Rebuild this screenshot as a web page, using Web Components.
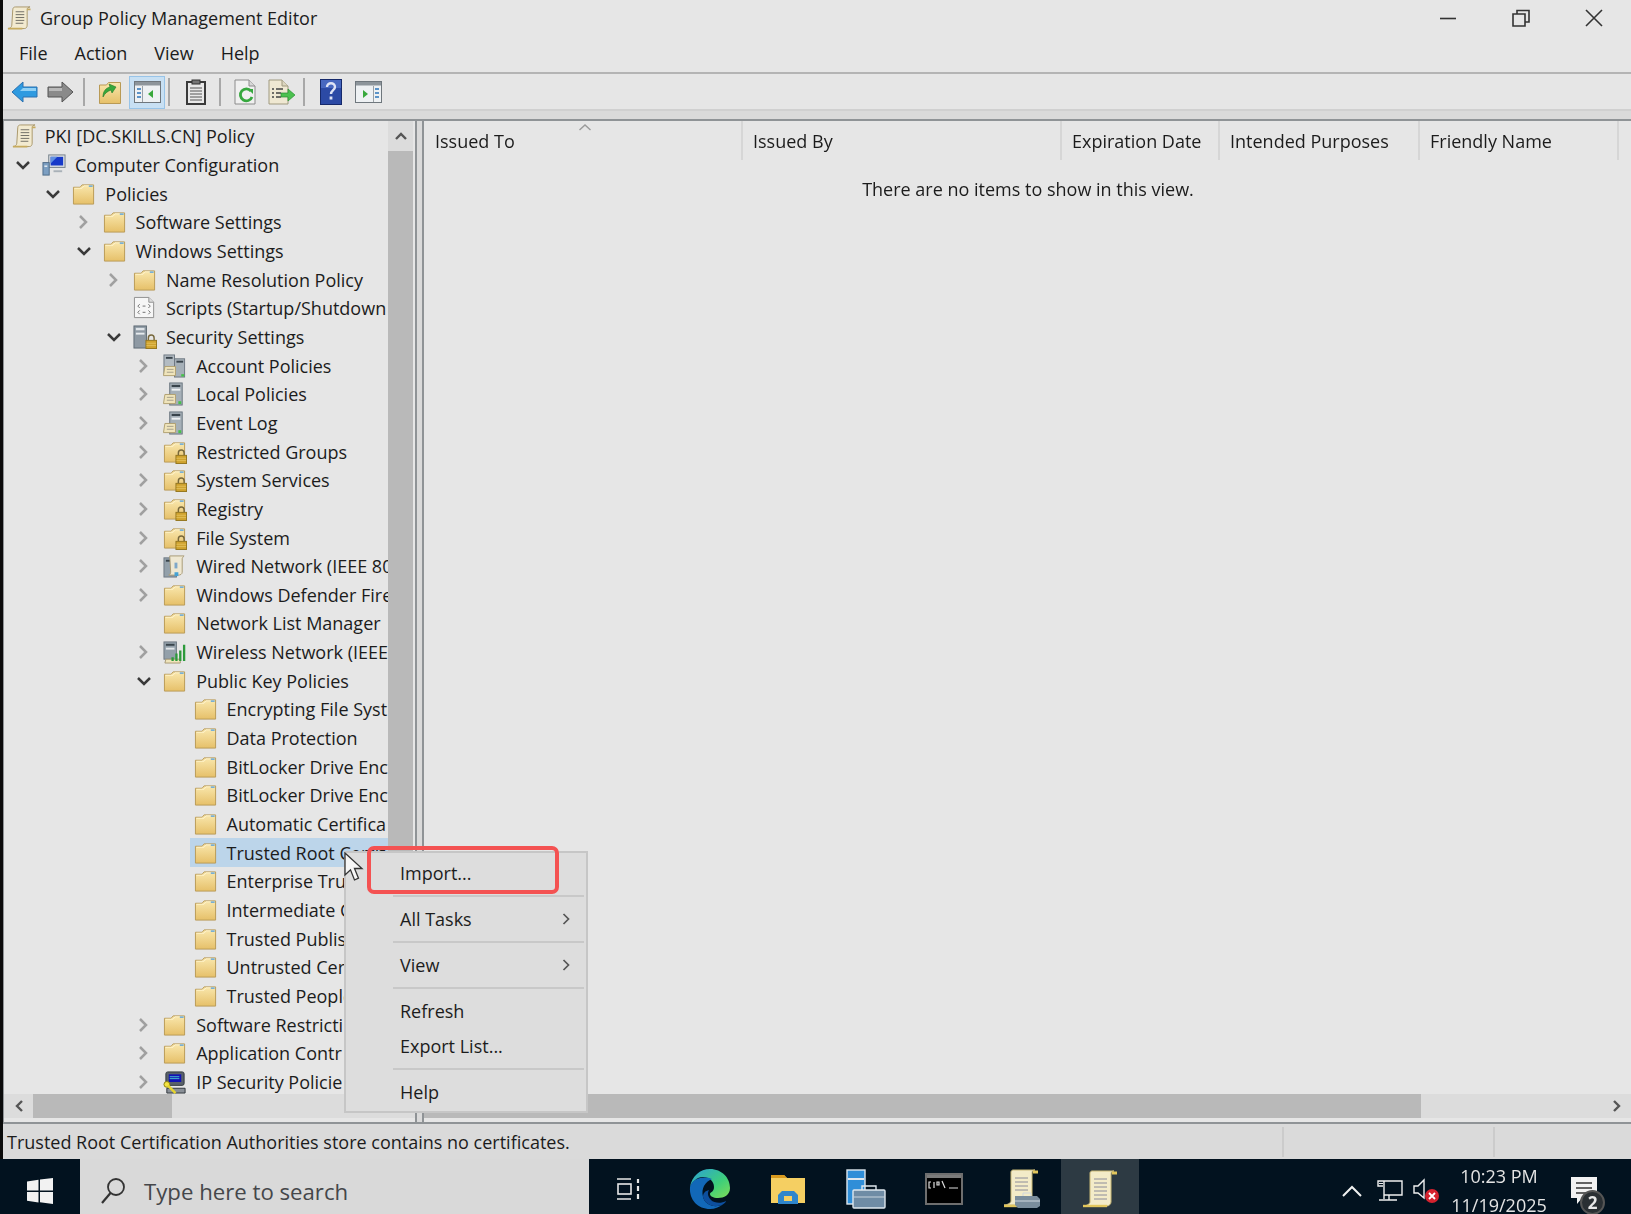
<!DOCTYPE html>
<html>
<head>
<meta charset="utf-8">
<title>Group Policy Management Editor</title>
<style>
  html, body { margin: 0; padding: 0; background: #0b0b0b; }
  body {
    width: 1631px;
    height: 1214px;
    overflow: hidden;
    font-family: "Open Sans", "Noto Sans", "Liberation Sans", sans-serif;
    font-size: 18px;
    color: #1c1c1c;
  }
</style>
</head>
<body>
<gp-app></gp-app>

<script>
const FOLDER_GRAD = `<defs><linearGradient id="fg" x1="0" y1="0" x2="0" y2="1"><stop offset="0" stop-color="#f9e7ad"/><stop offset="1" stop-color="#e6c069"/></linearGradient></defs>`;
const FOLDER = `${FOLDER_GRAD}<path d="M1.500 5.500h7l2-2.500h12v20h-21z" fill="url(#fg)" stroke="#b99a55"/><path d="M2.500 6.500h8l2-2.500h9" fill="none" stroke="#fff3cc"/><rect x="17.500" y="3.500" width="4" height="1.600" fill="#69a9d8"/>`;
const LOCK = `<path d="M16 16v-2.500a3 3 0 0 1 6 0V16" fill="none" stroke="#77683c" stroke-width="1.500"/><rect x="13.500" y="16" width="11" height="8.500" fill="#cfa22e" stroke="#94761f"/><path d="M14 19h10M14 21.500h10" stroke="#e8c865" stroke-width=".8"/>`;
const MINI_SCROLL = `<path d="M2 13h11v9.500H0.500z" fill="#efe4bb" stroke="#b0a070"/><path d="M4 16h7M4 19h7" stroke="#9d9684" stroke-width=".9"/>`;
const TOWER = `<rect x="7" y="1" width="13" height="23" fill="#a6b0b8" stroke="#69747e"/><rect x="9" y="3" width="9" height="2.200" fill="#39444c"/><rect x="9" y="7" width="9" height="2" fill="#eef1f3"/>`;
const SCROLL = `<path d="M6 4c0-2 1-3 3-3h15c-1.500 0-3 1-3 2.500V20c0 2-1 3.500-3 3.500H1c2 0 4-1.500 4-3.500z" fill="#f2ead0" stroke="#a8976a"/><path d="M21 3.500h3.500M1 23.500h15" stroke="#c7ab5e" stroke-width="1.800"/><path d="M9 6h9M9 9h9M9 12h9M9 15h9M9 18h8" stroke="#6d6c64"/>`;

const ICONS = {
  folder: FOLDER,
  lockfolder: FOLDER + LOCK,
  scroll: SCROLL,
  computer: `<rect x="7" y="2" width="17" height="13" fill="#d9dde2" stroke="#75808a"/><rect x="9" y="4" width="13" height="9" fill="#1739c9"/><path d="M9 4h7L9 11z" fill="#5f8ee0"/><path d="M12 18h9v2h-9z" fill="#a9b1b8"/><rect x="1" y="10" width="6.500" height="13" fill="#7c9fc2" stroke="#4e6b88"/><rect x="2.500" y="13" width="3" height="1.500" fill="#e9eef3"/>`,
  scripts: `<path d="M1.500 1.500h15l5 5v16h-20z" fill="#f6f6f6" stroke="#8e8e8e"/><path d="M16.500 1.500v5h5" fill="#ddd" stroke="#8e8e8e"/><path d="M7 8.500l-2 2 2 2M10 10.500h3M16 8.500l2 2-2 2M7 15l-2 2 2 2M10 17h3M16 15l2 2-2 2" fill="none" stroke="#6f6f6f"/>`,
  security: `<rect x="1" y="1" width="13" height="23" fill="#8e99a3" stroke="#5e6a74"/><rect x="3" y="3" width="9" height="2.500" fill="#dfe4e8"/><rect x="3" y="8" width="9" height="2" fill="#e7ebee"/>${LOCK}`,
  account: `<rect x="1" y="1" width="11" height="20" fill="#b3bcc3" stroke="#6e7882"/><rect x="3" y="3" width="7" height="2" fill="#39444c"/><rect x="12" y="5" width="10.500" height="19" fill="#a6b0b8" stroke="#6e7882"/><rect x="14" y="7" width="7" height="2" fill="#39444c"/><rect x="19" y="21" width="3" height="2.500" fill="#46c24a"/>${MINI_SCROLL}`,
  local: `${TOWER}<rect x="16" y="20" width="3" height="3" fill="#46c24a"/>${MINI_SCROLL}`,
  wired: `<rect x="1" y="4" width="13" height="20" fill="#93a0aa" stroke="#6e7882"/><rect x="3" y="6" width="9" height="2" fill="#39444c"/><path d="M7 2h15c-1 1-2 2-2 3v14c0 2-2 3-4 3H6c1 0 2-2 2-3z" fill="#efe8d2" stroke="#a79a75"/><rect x="12" y="9" width="3" height="6" fill="#7fa8c9"/><rect x="12" y="19" width="4" height="4" fill="#46a2d4"/>`,
  wireless: `<rect x="1" y="2" width="13" height="18" fill="#93a0aa" stroke="#6e7882"/><rect x="3" y="4" width="9" height="2" fill="#39444c"/><rect x="3" y="8" width="9" height="2" fill="#e3e7ea"/><path d="M3 20h15v4H2z" fill="#efe4bb" stroke="#a79a75"/><path d="M10 22v-4M14 22v-8M18 22v-11M22 22V5" stroke="#2c9a3b" stroke-width="2.400"/>`,
  ipsec: `<rect x="3" y="2" width="19" height="14" rx="2" fill="#59616a" stroke="#30363c"/><rect x="6" y="4.500" width="13" height="8" fill="#1212b5"/><path d="M7 7h10M7 9h10" stroke="#45c0d0"/><path d="M4 19h19v5H4z" fill="#8a9097" stroke="#30363c"/><circle cx="4" cy="15" r="3" fill="#f3e342" stroke="#8a7f10"/><path d="M5 16l8 8" stroke="#e6d52d" stroke-width="2.600"/>`
};

const chevronRight = `<svg width="12" height="16" viewBox="0 0 12 16"><path d="M3 2l6 6-6 6" fill="none" stroke="#a0a0a0" stroke-width="2.500"/></svg>`;
const chevronDown = `<svg width="16" height="12" viewBox="0 0 16 12"><path d="M2 3l6 6 6-6" fill="none" stroke="#3a3a3a" stroke-width="2.500"/></svg>`;

class GpTitlebar extends HTMLElement {
  constructor() {
    super();
    this.attachShadow({ mode: "open" }).innerHTML = `
      <style>
        :host { display: flex; align-items: center; height: 36px; padding-left: 4px; }
        svg.app { width: 24px; height: 24px; margin-right: 9px; }
        span { flex: 1; font-size: 18px; color: #1c1c1c; }
        .btns { display: flex; }
        .btns svg { display: block; margin-left: 51px; }
      </style>
      <svg class="app" viewBox="0 0 25 25">${ICONS.scroll}</svg>
      <span>Group Policy Management Editor</span>
      <div class="btns">
        <svg width="22" height="22" viewBox="0 0 22 22"><path d="M3 11.500h16" stroke="#333" stroke-width="1.600"/></svg>
        <svg width="22" height="22" viewBox="0 0 22 22"><path d="M3 7h12v12H3zM7 7V3.500h12v11.500h-4" fill="none" stroke="#333" stroke-width="1.600"/></svg>
        <svg width="22" height="22" viewBox="0 0 22 22" style="margin-right:26px"><path d="M3 3l16 16M19 3L3 19" stroke="#333" stroke-width="1.600"/></svg>
      </div>
    `;
  }
}

class GpMenubar extends HTMLElement {
  constructor() {
    super();
    this.attachShadow({ mode: "open" }).innerHTML = `
      <style>
        :host { display: flex; align-items: center; height: 34px; padding: 0 0 2px 16px; gap: 27px; border-bottom: 2px solid #b4b4b4; }
        span { font-size: 18px; color: #1c1c1c; }
      </style>
      <span>File</span><span>Action</span><span>View</span><span>Help</span>
    `;
  }
}

class GpToolbar extends HTMLElement {
  constructor() {
    super();
    this.attachShadow({ mode: "open" }).innerHTML = `
      <style>
        :host { display: flex; align-items: center; height: 34px; padding: 1px 0 0 8px; border-bottom: 2px solid #d0d0d0; }
        svg { display: block; flex: none; }
        i { display: block; width: 2px; height: 28px; background: #a8a8a8; flex: none; }
        .on { display: flex; align-items: center; justify-content: center; width: 36px; height: 33px; background: #c8e0f3; border: 1px solid #98c4e8; box-sizing: border-box; flex: none; }
      </style>
      <svg style="margin-left:0" width="27" height="24" viewBox="0 0 27 24"><path d="M1 12L12 2v5h14v10H12v5z" fill="#2e9ae0" stroke="#2a70b0"/><path d="M12 8h13v3H9z" fill="#8fd0f5"/></svg>
      <svg style="margin-left:9px" width="27" height="24" viewBox="0 0 27 24"><path d="M26 12L15 2v5H1v10h14v5z" fill="#8a8a8a" stroke="#555"/><path d="M2 8h13v3H2z" fill="#b9b9b9"/></svg>
      <i style="margin-left:9px"></i>
      <svg style="margin-left:13px" width="24" height="26" viewBox="0 0 24 26">${FOLDER_GRAD}<path d="M1.500 6h7l2-2.500h12v21h-21z" fill="url(#fg)" stroke="#b99a55"/><path d="M5 18c0-6 3-9 7-10l-1-3 7 3-4 6-1-3c-3 1-6 3-8 7z" fill="#38a83c" stroke="#1f7a25" stroke-width=".6"/></svg>
      <div class="on" style="margin-left:7px"><svg width="27" height="24" viewBox="0 0 27 24"><rect x=".5" y="1.500" width="26" height="21" fill="#eef1f3" stroke="#6f777d"/><rect x="1" y="2" width="25" height="3.500" fill="#8d959b"/><path d="M3 9h4M3 13h4M3 17h4" stroke="#5b93c8" stroke-width="2"/><path d="M8.500 6v16" stroke="#9aa0a6"/><path d="M19 10v8l-5-4z" fill="#38a83c"/></svg></div>
      <i style="margin-left:3px"></i>
      <svg style="margin-left:15px" width="22" height="26" viewBox="0 0 22 26"><rect x="2" y="3" width="18" height="22" fill="#e9e9e9" stroke="#3a3a3a" stroke-width="2"/><rect x="7" y="1" width="8" height="4" fill="#777" stroke="#333"/><path d="M5 9h12M5 12h12M5 15h12M5 18h12M5 21h12" stroke="#555"/></svg>
      <i style="margin-left:12px"></i>
      <svg style="margin-left:13px" width="22" height="26" viewBox="0 0 22 26"><path d="M1 1h14l6 6v18H1z" fill="#f0f0f0" stroke="#8c8c8c"/><path d="M15 1v6h6" fill="#d8d8d8" stroke="#8c8c8c"/><path d="M17 12a6 6 0 1 0 1 6" fill="none" stroke="#36a83e" stroke-width="2.800"/><path d="M14 10l5 0v5z" fill="#36a83e"/></svg>
      <svg style="margin-left:12px" width="28" height="26" viewBox="0 0 28 26"><path d="M1 1h13l6 6v18H1z" fill="#efe8d2" stroke="#a09a80"/><path d="M14 1v6h6" fill="#dcd6c0" stroke="#a09a80"/><path d="M4 10h2M8 10h7M4 14h2M8 14h5M4 18h2M8 18h5" stroke="#444" stroke-width="1.400"/><path d="M13 14h7v-4l7 6-7 6v-4h-7z" fill="#4cc14f" stroke="#2a9032" stroke-width=".7"/></svg>
      <i style="margin-left:7px"></i>
      <svg style="margin-left:15px" width="22" height="26" viewBox="0 0 22 26"><rect x=".5" y=".5" width="21" height="25" fill="#2c4aa5" stroke="#16296b"/><rect x="1" y="1" width="20" height="8" fill="#4868c0"/><path d="M7 8c0-5 8-5 8 0 0 3-4 3.500-4 7" fill="none" stroke="#dfe4f5" stroke-width="2.400"/><rect x="9.600" y="17.500" width="2.800" height="3" fill="#dfe4f5"/></svg>
      <svg style="margin-left:13px" width="27" height="24" viewBox="0 0 27 24"><rect x=".5" y="1.500" width="26" height="21" fill="#eef1f3" stroke="#6f777d"/><rect x="1" y="2" width="25" height="3.500" fill="#8d959b"/><path d="M20 9h4M20 13h4M20 17h4" stroke="#5b93c8" stroke-width="2"/><path d="M18.500 6v16" stroke="#9aa0a6"/><path d="M8 10v8l5-4z" fill="#38a83c"/></svg>
    `;
  }
}

class TreeRow extends HTMLElement {
  constructor() {
    super();
    const level = +this.getAttribute("level");
    const kind = this.getAttribute("icon") || "folder";
    const exp = this.getAttribute("exp");
    const pad = level === 0 ? 7.7 : level * 30.3 - 21.3;
    const arrow = exp === "open" ? chevronDown : exp === "closed" ? chevronRight : "";
    this.attachShadow({ mode: "open" }).innerHTML = `
      <style>
        :host { display: flex; align-items: center; height: 28.67px; padding-left: ${pad}px; white-space: nowrap; }
        .exp { width: ${level === 0 ? 0 : 29}px; flex: none; display: flex; align-items: center; padding-left: ${level === 0 ? 0 : exp === "open" ? 2 : 3}px; box-sizing: border-box; }
        .item { flex: 1; display: flex; align-items: center; height: 100%; margin-left: -4px; padding-left: 4px; }
        :host([selected]) .item { background: #bcd5ea; }
        svg.ico { width: 24px; height: 24px; margin-right: 9px; flex: none; }
        .exp svg { display: block; }
        span { font-size: 18px; color: #1c1c1c; }
      </style>
      <div class="exp">${arrow}</div>
      <div class="item"><svg class="ico" viewBox="0 0 25 25">${ICONS[kind]}</svg><span><slot></slot></span></div>
    `;
  }
}

class GpTree extends HTMLElement {
  constructor() {
    super();
    this.attachShadow({ mode: "open" }).innerHTML = `
      <style>
        :host { display: flex; flex-direction: column; width: 411px; border-right: 2px solid #8f9396; border-left: 1px solid #8f9396; }
        .top { flex: 1; display: flex; min-height: 0; }
        .rows { width: 384px; padding-top: 1px; overflow: hidden; flex: none; box-sizing: border-box; }
        .vbar { flex: none; width: 25px; display: flex; flex-direction: column; background: #dcdcdc; }
        .up { height: 30px; display: flex; align-items: center; justify-content: center; }
        .thumb { flex: 1; background: #b9b9b9; }
        .hbar { height: 24px; margin-bottom: 4px; flex: none; display: flex; align-items: center; background: #dcdcdc; }
        .left { width: 29px; display: flex; justify-content: center; }
        .hthumb { width: 139px; height: 24px; background: #b9b9b9; }
      </style>
      <div class="top">
        <div class="rows"><slot></slot></div>
        <div class="vbar">
          <div class="up"><svg width="14" height="10" viewBox="0 0 14 10"><path d="M2 8l5-5 5 5" fill="none" stroke="#555" stroke-width="2.400"/></svg></div>
          <div class="thumb"></div>
        </div>
      </div>
      <div class="hbar">
        <div class="left"><svg width="10" height="14" viewBox="0 0 10 14"><path d="M8 2L3 7l5 5" fill="none" stroke="#555" stroke-width="2.400"/></svg></div>
        <div class="hthumb"></div>
      </div>
    `;
  }
}

class GpList extends HTMLElement {
  constructor() {
    super();
    const cols = [["Issued To", 319], ["Issued By", 319], ["Expiration Date", 158], ["Intended Purposes", 200], ["Friendly Name", 199]];
    this.attachShadow({ mode: "open" }).innerHTML = `
      <style>
        :host { display: flex; flex-direction: column; flex: 1; min-width: 0; border-left: 2px solid #8f9396; position: relative; }
        .head { display: flex; height: 39px; flex: none; }
        .col { box-sizing: border-box; padding-left: 10px; display: flex; align-items: center; border-right: 2px solid #d6d6d6; font-size: 18px; color: #1c1c1c; }
        .col:first-child { padding-left: 11px; }
        .sort { position: absolute; left: 154px; top: 2px; }
        .empty { flex: 1; text-align: center; padding-top: 17px; font-size: 18px; color: #1c1c1c; width: 1208px; }
        .hbar { height: 24px; margin-bottom: 4px; display: flex; align-items: center; background: #dcdcdc; flex: none; }
        .thumb { width: 997px; height: 24px; background: #b9b9b9; }
        .end { margin-left: auto; margin-right: 9px; display: block; }
      </style>
      <div class="head">
        ${cols.map(c => `<div class="col" style="width:${c[1]}px">${c[0]}</div>`).join("")}
      </div>
      <svg class="sort" width="14" height="8" viewBox="0 0 14 8"><path d="M1.500 7L7 2l5.500 5" fill="none" stroke="#9a9a9a" stroke-width="1.400"/></svg>
      <div class="empty">There are no items to show in this view.</div>
      <div class="hbar"><div class="thumb"></div><svg class="end" width="10" height="14" viewBox="0 0 10 14"><path d="M2 2l5 5-5 5" fill="none" stroke="#555" stroke-width="2.400"/></svg></div>
    `;
  }
}

class CtxMenu extends HTMLElement {
  constructor() {
    super();
    const sub = `<svg width="8" height="14" viewBox="0 0 8 14"><path d="M1.500 2l5 5-5 5" fill="none" stroke="#555" stroke-width="1.700"/></svg>`;
    this.attachShadow({ mode: "open" }).innerHTML = `
      <style>
        :host { position: absolute; left: 344px; top: 851px; width: 244px; height: 262px; box-sizing: border-box; padding: 2px 0; background: #dddddd; border: 2px solid #c6c6c6; }
        .it { height: 35px; display: flex; align-items: center; justify-content: space-between; padding: 0 16px 0 54px; font-size: 18px; color: #1c1c1c; }
        hr { border: 0; height: 2px; background: #c8c8c8; margin: 4.500px 2px 4.500px 47px; }
        .mark { position: absolute; left: 21px; top: -7px; width: 192px; height: 48px; box-sizing: border-box; border: 4px solid #f45252; border-radius: 7px; }
      </style>
      <div class="it">Import...</div>
      <hr>
      <div class="it">All Tasks ${sub}</div>
      <hr>
      <div class="it">View ${sub}</div>
      <hr>
      <div class="it">Refresh</div>
      <div class="it">Export List...</div>
      <hr>
      <div class="it">Help</div>
      <div class="mark"></div>
    `;
  }
}

class MouseCursor extends HTMLElement {
  constructor() {
    super();
    this.attachShadow({ mode: "open" }).innerHTML = `
      <style>:host { position: absolute; left: 344px; top: 852px; width: 20px; height: 30px; }</style>
      <svg width="20" height="30" viewBox="0 0 20 30"><path d="M1 1v22l5.500-5.200L10.500 28l4-1.800-4-9.700H18z" fill="#f6f6f6" stroke="#333" stroke-width="1.300"/></svg>
    `;
  }
}

class GpStatus extends HTMLElement {
  constructor() {
    super();
    this.attachShadow({ mode: "open" }).innerHTML = `
      <style>
        :host { display: flex; height: 35px; flex: none; background: #dadada; align-items: center; font-size: 18px; color: #1c1c1c; padding-left: 4px; border-top: 2px solid #8f9396; }
        span { flex: none; width: 1275px; }
        i { display: block; width: 2px; height: 30px; background: #cbcbcb; flex: none; }
      </style>
      <span>Trusted Root Certification Authorities store contains no certificates.</span>
      <i></i><div style="width:209px"></div><i></i>
    `;
  }
}

class GpTaskbar extends HTMLElement {
  constructor() {
    super();
    this.attachShadow({ mode: "open" }).innerHTML = `
      <style>
        :host { display: flex; align-items: center; height: 55px; flex: none; background: #02121f; position: relative; color: #e8e8e8; }
        svg { display: block; flex: none; }
        .start { width: 80px; height: 100%; display: flex; align-items: center; justify-content: center; padding-top: 9px; box-sizing: border-box; }
        .search { width: 509px; height: 100%; background: #d9d9d9; display: flex; align-items: center; padding: 9px 0 0 20px; box-sizing: border-box; gap: 18px; }
        .search span { font-size: 22.2px; color: #45474a; }
        .app { width: 78px; height: 100%; display: flex; align-items: center; justify-content: center; flex: none; padding-top: 5px; box-sizing: border-box; }
        .active { background: #2d3a43; }
        .tray { margin-left: auto; display: flex; align-items: center; height: 100%; padding-top: 9px; box-sizing: border-box; }
        .clock { text-align: center; font-size: 18px; line-height: 29px; width: 116px; color: #e4e4e4; margin-top: -9px; padding-top: 8px; }
      </style>
      <div class="start"><svg width="26" height="26" viewBox="0 0 26 26"><path d="M0 3.500l11.500-1.700v10.600H0zM13 1.600L26 0v12.400H13zM0 14h11.500v10.400L0 22.700zM13 14h13v12l-13-1.800z" fill="#f2f2f2"/></svg></div>
      <div class="search">
        <svg width="26" height="28" viewBox="0 0 26 28"><circle cx="16" cy="10" r="8" fill="none" stroke="#333" stroke-width="1.800"/><path d="M10.500 16L2 26" stroke="#333" stroke-width="2.200"/></svg>
        <span>Type here to search</span>
      </div>
      <div class="app" style="margin-left:13px;width:52px"><svg width="26" height="24" viewBox="0 0 26 24"><path d="M2 2h14M2 22h14" stroke="#e8e8e8" stroke-width="1.600"/><rect x="3" y="7" width="13" height="10" fill="none" stroke="#e8e8e8" stroke-width="1.600"/><path d="M23 2v4M23 9v5M23 17v5" stroke="#e8e8e8" stroke-width="2.200"/></svg></div>
      <div class="app" style="margin-left:17px"><svg width="42" height="42" viewBox="0 0 42 42"><defs><linearGradient id="eg" x1="0" y1="0" x2="1" y2="1"><stop offset="0" stop-color="#2b9fd9"/><stop offset=".6" stop-color="#3ecf7a"/><stop offset="1" stop-color="#7fdc58"/></linearGradient></defs><path d="M1 19C3 8 11 1 21 1c12 0 20 9 20 19 0 7-6 10-12 10-5 0-8-2-8-4 0-2 4-2 4-7 0-6-5-10-11-10C8 9 3 14 1 19z" fill="url(#eg)"/><path d="M1 19c-1 13 8 22 20 22 5 0 9-2 12-4-8 3-17 0-19-8-2-9 2-15 9-18C12 7 3 12 1 19z" fill="#1268b8"/><path d="M14 29c2 8 11 11 19 8 2-1 4-3 4-4-5 3-12 2-15-1-3-3-4-7-2-10-4 1-6 3-6 7z" fill="#0d4f9e"/></svg></div>
      <div class="app"><svg width="36" height="32" viewBox="0 0 36 32"><path d="M1 2h13l3 3h18v25H1z" fill="#f5cf62"/><path d="M1 2h13l3 3H1z" fill="#d99a1e"/><path d="M8 22l4-4h12l4 4v9H8z" fill="#2f86cc"/><rect x="14" y="23" width="8" height="5" fill="#f5cf62"/></svg></div>
      <div class="app"><svg width="40" height="40" viewBox="0 0 40 40"><rect x="1" y="1" width="18" height="34" fill="#2f8ed8" stroke="#dfe7ee" stroke-width="1.400"/><rect x="2" y="9" width="16" height="2" fill="#dfe7ee"/><rect x="7" y="21" width="32" height="18" rx="1" fill="#6f8ca5" stroke="#dfe7ee" stroke-width="1.400"/><path d="M16 21v-4h14v4" fill="none" stroke="#dfe7ee" stroke-width="1.400"/><path d="M7 28h32" stroke="#c8d3dc"/></svg></div>
      <div class="app"><svg width="38" height="32" viewBox="0 0 38 32"><rect x="1" y="1" width="36" height="30" fill="#000" stroke="#6e6e6e" stroke-width="2"/><rect x="2" y="2" width="34" height="3" fill="#7b7b7b"/><path d="M6 9H4v6h2M9 9v6M12 9h2v3h-2zM17 8l3 7M24 15h9" fill="none" stroke="#ddd" stroke-width="1.200"/></svg></div>
      <div class="app"><svg width="38" height="40" viewBox="0 0 38 40"><path d="M8 3c0-1 1-2 2-2h22c-2 0-3 1-3 3v28c0 2-2 4-4 4H1c3 0 7-2 7-4z" fill="#f3ebc8" stroke="#c9b877"/><path d="M30 3h5" stroke="#e2c65c" stroke-width="3"/><path d="M1 37h20" stroke="#e2c65c" stroke-width="2.400"/><path d="M12 9h13M12 13h13M12 17h13M12 21h13" stroke="#8c8c9a"/><path d="M12 27h22l3 3v7l-3 2H15l-3-3z" fill="#7a8d9c"/><path d="M20 27v-3h8v3M12 32h25" fill="none" stroke="#cfd7dd"/></svg></div>
      <div class="app active"><svg width="36" height="38" viewBox="0 0 36 38"><path d="M8 3c0-1 1-2 2-2h22c-2 0-3 1-3 3v28c0 2-2 4-4 4H1c3 0 7-2 7-4z" fill="#f3ebc8" stroke="#c9b877"/><path d="M30 3h5" stroke="#e2c65c" stroke-width="3"/><path d="M1 36h24" stroke="#e2c65c" stroke-width="2.400"/><path d="M12 9h13M12 13h13M12 17h13M12 21h13M12 25h13M12 29h13" stroke="#8c8c9a"/></svg></div>
      <div class="tray">
        <svg width="22" height="14" viewBox="0 0 22 14" style="margin-right:13px"><path d="M2 12l9-9 9 9" fill="none" stroke="#f0f0f0" stroke-width="2"/></svg>
        <svg width="28" height="24" viewBox="0 0 28 24" style="margin-right:9px"><path d="M8 2h18v14H8M7 7H2V2h6v18M3 21h10M13 16v5M7 21h14" fill="none" stroke="#f0f0f0" stroke-width="1.400"/><path d="M3 4.500h4" stroke="#f0f0f0"/></svg>
        <svg width="28" height="26" viewBox="0 0 28 26"><path d="M1 8h4l6-6v18l-6-5H1z" fill="none" stroke="#f0f0f0" stroke-width="1.400"/><circle cx="19" cy="18" r="7" fill="#d4222e"/><path d="M16 15l6 6M22 15l-6 6" stroke="#fff" stroke-width="1.800"/></svg>
        <div class="clock">10:23 PM<br>11/19/2025</div>
        <svg width="40" height="44" viewBox="0 0 40 44" style="margin:13px 21px 0 13px"><path d="M1 1h26v21H12l-5 6v-6H1z" fill="#f2f2f2"/><path d="M6 7h16M6 12h16M6 17h11" stroke="#333" stroke-width="1.600"/></svg>
      </div>
      <div style="position:absolute;right:26px;top:31px;width:25px;height:25px;border-radius:50%;background:#2a2f33;border:2px solid #555;box-sizing:border-box;text-align:center;font:bold 17px/21px 'Open Sans',sans-serif;color:#e8e8e8">2</div>
    `;
  }
}

class GpApp extends HTMLElement {
  constructor() {
    super();
    const rows = [
      [0, "scroll", "", "PKI [DC.SKILLS.CN] Policy"],
      [1, "computer", "open", "Computer Configuration"],
      [2, "folder", "open", "Policies"],
      [3, "folder", "closed", "Software Settings"],
      [3, "folder", "open", "Windows Settings"],
      [4, "folder", "closed", "Name Resolution Policy"],
      [4, "scripts", "", "Scripts (Startup/Shutdown"],
      [4, "security", "open", "Security Settings"],
      [5, "account", "closed", "Account Policies"],
      [5, "local", "closed", "Local Policies"],
      [5, "local", "closed", "Event Log"],
      [5, "lockfolder", "closed", "Restricted Groups"],
      [5, "lockfolder", "closed", "System Services"],
      [5, "lockfolder", "closed", "Registry"],
      [5, "lockfolder", "closed", "File System"],
      [5, "wired", "closed", "Wired Network (IEEE 80"],
      [5, "folder", "closed", "Windows Defender Fire"],
      [5, "folder", "", "Network List Manager"],
      [5, "wireless", "closed", "Wireless Network (IEEE"],
      [5, "folder", "open", "Public Key Policies"],
      [6, "folder", "", "Encrypting File Syst"],
      [6, "folder", "", "Data Protection"],
      [6, "folder", "", "BitLocker Drive Enc"],
      [6, "folder", "", "BitLocker Drive Enc"],
      [6, "folder", "", "Automatic Certifica"],
      [6, "folder", "sel", "Trusted Root Certif"],
      [6, "folder", "", "Enterprise Trus"],
      [6, "folder", "", "Intermediate C"],
      [6, "folder", "", "Trusted Publis"],
      [6, "folder", "", "Untrusted Cer"],
      [6, "folder", "", "Trusted People"],
      [5, "folder", "closed", "Software Restricti"],
      [5, "folder", "closed", "Application Contr"],
      [5, "ipsec", "closed", "IP Security Policie"]
    ];
    this.attachShadow({ mode: "open" }).innerHTML = `
      <style>
        :host { display: flex; flex-direction: column; width: 1631px; height: 1214px; position: relative; filter: blur(.4px); }
        .win { flex: none; height: 1159px; margin-left: 3px; background: #e6e6e6; display: flex; flex-direction: column; }
        .strip { height: 8px; flex: none; background: #dadada; }
        .main { flex: 1; min-height: 0; display: flex; border-top: 2px solid #8f9396; }
        .gap { width: 5px; flex: none; background: #dadada; }
      </style>
      <div class="win">
        <gp-titlebar></gp-titlebar>
        <gp-menubar></gp-menubar>
        <gp-toolbar></gp-toolbar>
        <div class="strip"></div>
        <div class="main">
          <gp-tree>
            ${rows.map(r => `<tree-row level="${r[0]}" icon="${r[1]}" exp="${r[2]}"${r[2] === "sel" ? " selected" : ""}>${r[3]}</tree-row>`).join("")}
          </gp-tree>
          <div class="gap"></div>
          <gp-list></gp-list>
        </div>
        <gp-status></gp-status>
      </div>
      <gp-taskbar></gp-taskbar>
      <ctx-menu></ctx-menu>
      <mouse-cursor></mouse-cursor>
    `;
  }
}

customElements.define("gp-titlebar", GpTitlebar);
customElements.define("gp-menubar", GpMenubar);
customElements.define("gp-toolbar", GpToolbar);
customElements.define("tree-row", TreeRow);
customElements.define("gp-tree", GpTree);
customElements.define("gp-list", GpList);
customElements.define("ctx-menu", CtxMenu);
customElements.define("mouse-cursor", MouseCursor);
customElements.define("gp-status", GpStatus);
customElements.define("gp-taskbar", GpTaskbar);
customElements.define("gp-app", GpApp);
</script>
</body>
</html>
